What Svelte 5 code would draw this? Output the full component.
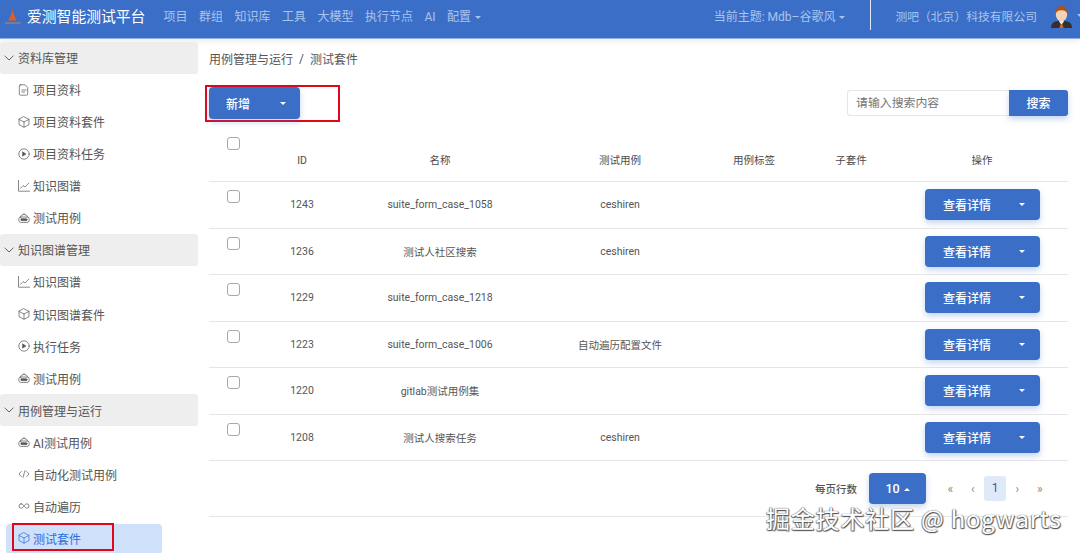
<script lang="ts">
  const navItems = ['项目', '群组', '知识库', '工具', '大模型', '执行节点', 'AI'];

  const menu = [
    { title: '资料库管理', items: [
      { icon: 'doc', label: '项目资料' },
      { icon: 'cube', label: '项目资料套件' },
      { icon: 'play', label: '项目资料任务' },
      { icon: 'chart', label: '知识图谱' },
      { icon: 'robot', label: '测试用例' }
    ] },
    { title: '知识图谱管理', items: [
      { icon: 'chart', label: '知识图谱' },
      { icon: 'cube', label: '知识图谱套件' },
      { icon: 'play', label: '执行任务' },
      { icon: 'robot', label: '测试用例' }
    ] },
    { title: '用例管理与运行', items: [
      { icon: 'robot', label: 'AI测试用例' },
      { icon: 'code', label: '自动化测试用例' },
      { icon: 'loop', label: '自动遍历' },
      { icon: 'cube', label: '测试套件', active: true }
    ] }
  ];

  const rows = [
    { id: 1243, name: 'suite_form_case_1058', testCase: 'ceshiren' },
    { id: 1236, name: '测试人社区搜索', testCase: 'ceshiren' },
    { id: 1229, name: 'suite_form_case_1218', testCase: '' },
    { id: 1223, name: 'suite_form_case_1006', testCase: '自动遍历配置文件' },
    { id: 1220, name: 'gitlab测试用例集', testCase: '' },
    { id: 1208, name: '测试人搜索任务', testCase: 'ceshiren' }
  ];
</script>

{#snippet icon(name)}
  <svg class="icon" viewBox="0 0 12 12" fill="none" stroke="currentColor" stroke-width="0.7" stroke-linecap="round" stroke-linejoin="round">
    {#if name === 'doc'}
      <path d="M2.5 .8h4.6l2.6 2.6v6.600a1.200 1.200 0 0 1-1.200 1.200h-6a1.200 1.200 0 0 1-1.200-1.200V2a1.200 1.200 0 0 1 1.200-1.200z" />
      <path d="M3.800 6h4.400M3.800 8h2.800" />
    {:else if name === 'cube'}
      <path d="M6 .8l5 2.6v5.2l-5 2.6-5-2.6V3.4z" />
      <path d="M1 3.4l5 2.6 5-2.6M6 6v5.2" />
    {:else if name === 'play'}
      <circle cx="6" cy="6" r="5.2" />
      <path d="M4.900 4.100L7.800 6 4.900 7.900z" fill="currentColor" />
    {:else if name === 'chart'}
      <path d="M.5 .2v11h11" />
      <path d="M2.400 8.400l2.700-2.800 1.800 1.400 3.800-3.800" />
    {:else if name === 'robot'}
      <path d="M6 1.200v1.400" />
      <path d="M2.400 5a3.600 2.500 0 0 1 7.200 0" />
      <rect x=".8" y="5" width="10.400" height="5.400" rx="2" />
      <rect x="2.800" y="6.800" width="6.400" height="1.800" rx=".9" fill="currentColor" />
    {:else if name === 'code'}
      <path d="M3.400 3.400L1 6l2.400 2.600M8.600 3.400L11 6 8.600 8.600M6.900 2.600L5.100 9.400" />
    {:else if name === 'loop'}
      <path d="M3.200 3.800a2.200 2.200 0 1 0 0 4.400c1.200 0 2-1.100 2.800-2.200s1.600-2.200 2.800-2.200a2.200 2.200 0 1 1 0 4.400c-1.200 0-2-1.100-2.800-2.200S4.400 3.800 3.200 3.800z" />
    {/if}
  </svg>
{/snippet}

<div class="page">
  <header class="topbar">
    <svg class="logo" viewBox="0 0 16 16">
      <path d="M7.500 .5C7.900 4 9 7 11.500 12.500H3.500C6 7 7.100 4 7.500 .5z" fill="#dc5f2a" />
      <rect x="0" y="14.500" width="15.500" height="1" fill="#c98468" />
    </svg>
    <span class="brand">爱测智能测试平台</span>
    <nav class="nav">
      {#each navItems as item}
        <span>{item}</span>
      {/each}
      <span>配置<i class="caret"></i></span>
    </nav>
    <span class="theme">当前主题: Mdb–谷歌风<i class="caret"></i></span>
    <span class="divider"></span>
    <span class="company">测吧（北京）科技有限公司</span>
    <svg class="avatar" viewBox="0 0 22 24">
      <path d="M0 24c0-5 3-7.500 11-7.500S22 19 22 24z" fill="#33302e" />
      <path d="M8 16.500h6L11 21z" fill="#f3ede6" />
      <path d="M10 20h2l1.200 4H8.800z" fill="#d9622b" />
      <ellipse cx="11" cy="9.500" rx="6" ry="7.500" fill="#f4d3b3" />
      <path d="M4.800 10C3.800 3.500 7.500 1 11 1s7.200 2.500 6.200 9C16.700 7 15 5.500 11 5.500S5.300 7 4.800 10z" fill="#a8521c" />
    </svg>
    <i class="caret avatar-caret"></i>
  </header>

  <div class="body">
    <aside class="sidebar">
      {#each menu as group}
        <div class="group-title">
          <svg class="chevron" viewBox="0 0 10 6" fill="none" stroke="currentColor" stroke-width="0.9"><path d="M.6 .8L5 5 9.400 .8" /></svg>
          {group.title}
        </div>
        {#each group.items as item}
          <div class="item" class:active={item.active}>
            {@render icon(item.icon)}
            <span>{item.label}</span>
            {#if item.active}<span class="mark"></span>{/if}
          </div>
        {/each}
      {/each}
    </aside>

    <main class="main">
      <div class="crumbs">用例管理与运行<span class="sep">/</span>测试套件</div>

      <div class="toolbar">
        <div class="marked">
          <button class="btn add" type="button">新增<i class="caret"></i></button>
        </div>
        <div class="search">
          <input type="text" placeholder="请输入搜索内容" />
          <button type="button">搜索</button>
        </div>
      </div>

      <div class="table">
        <div class="row head">
          <span class="check"></span>
          <span>ID</span>
          <span>名称</span>
          <span>测试用例</span>
          <span>用例标签</span>
          <span>子套件</span>
          <span>操作</span>
        </div>
        {#each rows as row}
          <div class="row">
            <span class="check"></span>
            <span>{row.id}</span>
            <span>{row.name}</span>
            <span>{row.testCase}</span>
            <span></span>
            <span></span>
            <span class="ops"><button class="btn detail" type="button">查看详情<i class="caret"></i></button></span>
          </div>
        {/each}
      </div>

      <div class="pager">
        <span class="per-page">每页行数</span>
        <button class="btn size" type="button">10<i class="caret up"></i></button>
        <div class="pages">
          <span>«</span>
          <span>‹</span>
          <span class="current">1</span>
          <span>›</span>
          <span>»</span>
        </div>
      </div>
    </main>
  </div>

  <div class="watermark">掘金技术社区 @ hogwarts</div>
</div>

<style>
  :global(body) { margin: 0; background: #fff; }

  .page {
    position: relative;
    width: 1080px;
    height: 553px;
    overflow: hidden;
    font-family: Roboto, "Noto Sans CJK SC", sans-serif;
    color: #555;
    font-size: 12px;
  }

  .caret {
    display: inline-block;
    width: 0;
    height: 0;
    margin-left: 4px;
    vertical-align: middle;
    border-left: 3.5px solid transparent;
    border-right: 3.5px solid transparent;
    border-top: 3.5px solid currentColor;
  }
  .caret.up { border-top: 0; border-bottom: 3.5px solid currentColor; }

  .topbar {
    display: flex;
    align-items: center;
    height: 30px;
    padding: 0 0 8px 5px;
    background: #3b6fc7;
    border-bottom: 1px solid #8fb0e3;
    color: #a9c4ee;
    box-shadow: 0 2px 6px rgba(0, 0, 0, .08);
  }
  .logo { flex: none; width: 16px; height: 16px; margin-top: 1px; }
  .brand { margin-left: 6px; font-size: 14.8px; color: #fff; white-space: nowrap; }
  .nav { display: flex; align-items: baseline; gap: 11.5px; margin-left: 18px; white-space: nowrap; }
  .theme { margin-left: auto; white-space: nowrap; }
  .divider { flex: none; align-self: flex-start; width: 1px; height: 30px; margin: 0 24px 0 25px; background: #dfe9f8; }
  .company { font-size: 11.8px; white-space: nowrap; }
  .avatar { flex: none; width: 21px; height: 23px; margin-left: 14px; margin-top: 2px; }
  .avatar-caret { flex: none; margin: 0 -3px 0 5px; }

  .body { display: flex; }

  .sidebar {
    flex: 0 0 198px;
    padding-top: 2.5px;
    box-sizing: border-box;
  }
  .group-title {
    display: flex;
    align-items: center;
    height: 32.07px;
    padding-left: 4px;
    background: #eeeeee;
    border-radius: 3px;
  }
  .chevron { width: 10px; height: 6px; margin-right: 4px; }
  .item {
    position: relative;
    display: flex;
    align-items: center;
    gap: 3px;
    height: 32.07px;
    padding-left: 18px;
  }
  .icon { width: 12px; height: 12px; flex: none; }
  .item.active {
    width: 156px;
    height: 30px;
    margin: 2px 0 0 6px;
    padding: 0 0 2px 12px;
    box-sizing: border-box;
    background: #cfe0fb;
    border-radius: 4px;
    color: #2a6fe0;
  }
  .mark {
    position: absolute;
    left: 6px;
    top: -1px;
    width: 102px;
    height: 28px;
    box-sizing: border-box;
    border: 2px solid #e0071b;
  }

  .main { flex: 1; padding: 0 12px 0 11px; min-width: 0; }

  .crumbs { height: 39px; display: flex; align-items: center; box-sizing: border-box; }
  .sep { margin: 0 6px; }

  .toolbar { display: flex; align-items: center; justify-content: space-between; margin-top: 7px; }
  .marked {
    width: 135px;
    height: 37px;
    margin-left: -4px;
    padding: 0 0 0 2px;
    box-sizing: border-box;
    border: 2px solid #e0071b;
  }

  .btn {
    position: relative;
    border: 0;
    border-radius: 4px;
    background: #3b6fc7;
    color: #fff;
    font: 500 12px Roboto, "Noto Sans CJK SC", sans-serif;
    box-shadow: 0 3px 6px rgba(59, 111, 199, .3);
    padding: 0;
  }
  .add { display: flex; align-items: center; width: 91px; height: 32px; padding-left: 17px; }
  .add .caret { margin-left: 30px; }
  .detail { display: flex; align-items: center; width: 115px; height: 31px; padding-left: 18px; }
  .detail .caret { margin-left: 28px; }

  .search { display: flex; height: 26px; margin-top: -2px; }
  .search input {
    width: 162px;
    box-sizing: border-box;
    padding: 0 8px;
    border: 1px solid #e6e6e6;
    border-right: 0;
    border-radius: 3px 0 0 3px;
    font: 11.9px Roboto, "Noto Sans CJK SC", sans-serif;
    outline: none;
  }
  .search input::placeholder { color: #757575; }
  .search button {
    width: 59px;
    border: 0;
    border-radius: 0 3px 3px 0;
    background: #3b6fc7;
    color: #fff;
    font: 500 12px Roboto, "Noto Sans CJK SC", sans-serif;
    box-shadow: 0 3px 6px rgba(59, 111, 199, .3);
  }

  .table { font-size: 10.5px; }
  .row {
    display: grid;
    grid-template-columns: 48px 90px 186px 174px 94px 100px 162px;
    align-items: center;
    height: 46.5px;
    box-sizing: border-box;
    border-bottom: 1px solid #e6e6e6;
    text-align: center;
  }
  .row.head { height: 60px; align-items: end; padding-bottom: 14px; color: #4a4a4a; }
  .check {
    justify-self: center;
    align-self: start;
    width: 13px;
    height: 13px;
    margin-top: 8px;
    box-sizing: border-box;
    border: 1px solid #a8a8a8;
    border-radius: 3px;
  }
  .head .check { margin-top: 15px; }
  .ops { display: flex; justify-content: flex-start; padding-left: 24px; }

  .pager { display: flex; align-items: center; height: 55.5px; padding-top: 1px; box-sizing: border-box; border-bottom: 1px solid #e6e6e6; }
  .per-page { margin-left: 606px; font-size: 10.5px; font-weight: 500; }
  .size { width: 57px; height: 31px; margin-left: 12px; font-size: 12.5px; }
  .pages { display: flex; align-items: center; margin-left: 13px; color: #8a8a8a; font-size: 12px; }
  .pages span { width: 22.5px; text-align: center; }
  .pages .current {
    width: 22px;
    height: 25px;
    line-height: 25px;
    background: #dfe9f8;
    border-radius: 3px;
    color: #3b5aa8;
  }

  .watermark {
    position: absolute;
    left: 766px;
    top: 501px;
    font: 24px/34px "Noto Sans CJK SC", sans-serif;
    letter-spacing: .8px;
    white-space: nowrap;
    color: #fff;
    text-shadow: 1px 1px 1px #555, -.5px -.5px 1px #777, .5px -.5px 1px #777, -.5px .5px 1px #777;
  }
</style>
